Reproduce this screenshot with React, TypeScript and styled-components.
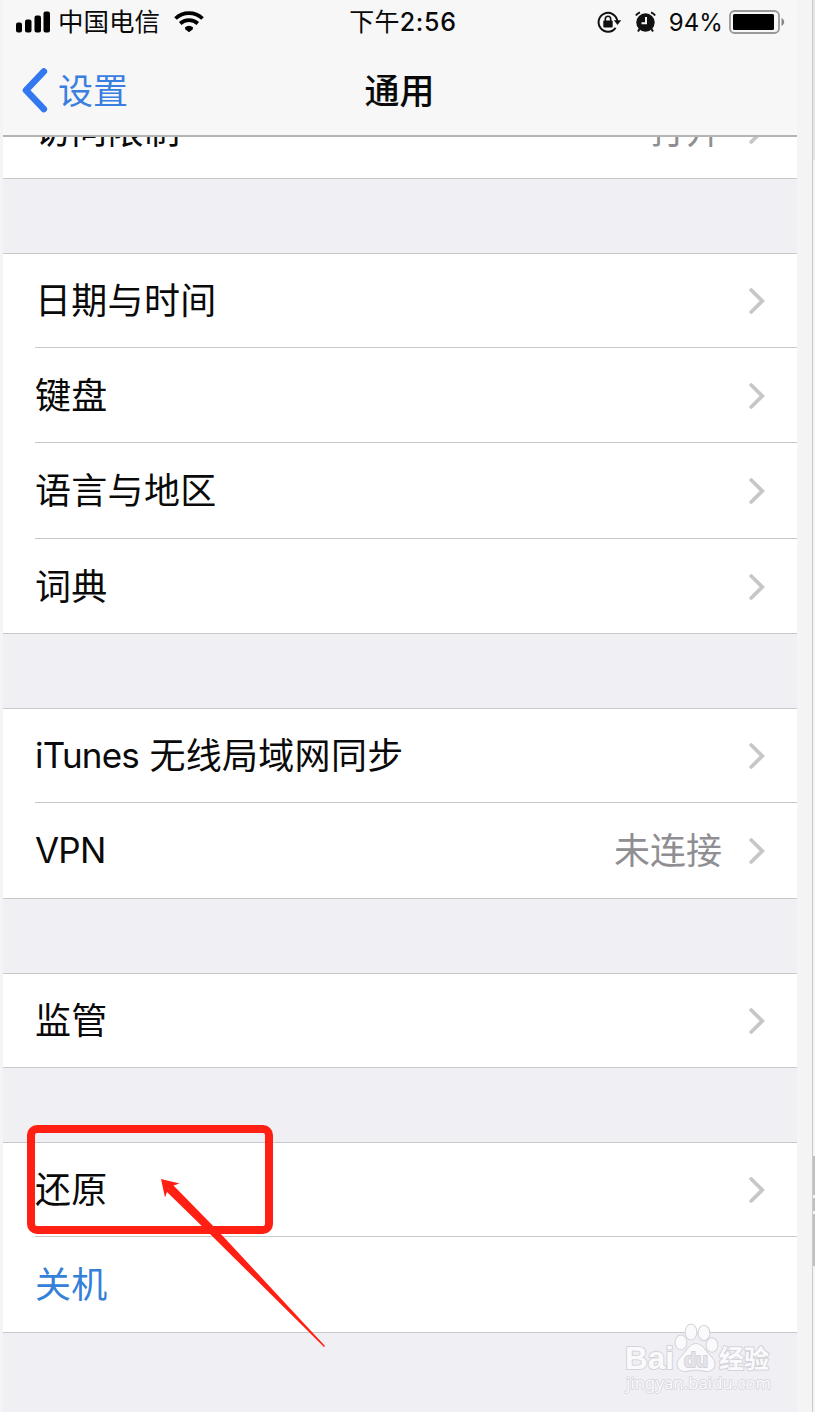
import React from 'react';
import styled, { createGlobalStyle } from 'styled-components';

const GlobalStyle = createGlobalStyle`
  * {
    box-sizing: border-box;
  }

  body {
    margin: 0;
    background: #f4f4f5;
    font-family: Inter, 'Noto Sans CJK SC', sans-serif;
    color: #0a0a0a;
  }
`;

const Page = styled.div`
  position: relative;
  display: flex;
  justify-content: space-between;
  width: 815px;
  height: 1412px;
  overflow: hidden;
`;

const Phone = styled.main`
  display: flex;
  flex-direction: column;
  width: 794px;
  margin-left: 3px;
  background: #efeff4;
`;

const Header = styled.header`
  height: 137px;
  background: #f7f7f8;
  border-bottom: 2px solid #b4b4b5;
`;

const StatusBar = styled.div`
  display: grid;
  grid-template-columns: 1fr auto 1fr;
  align-items: center;
  height: 44px;
  padding: 0 12px;
`;

const StatusGroup = styled.div<{ $end?: boolean }>`
  display: flex;
  align-items: center;
  justify-content: ${(props) => (props.$end ? 'flex-end' : 'flex-start')};

  svg {
    flex: none;
  }
`;

const Carrier = styled.span`
  margin: 0 14px 0 8px;
  font-size: 25.5px;
  line-height: 44px;
`;

const Clock = styled.span`
  padding: 1px 0 0 6px;
  font-size: 25px;
  font-weight: 500;
  letter-spacing: 0.7px;
  line-height: 43px;
`;

const Meridiem = styled.span`
  font-weight: 400;
  letter-spacing: 0.2px;
`;

const Percent = styled.span`
  margin: 0 6px 0 13px;
  padding-top: 1px;
  font-size: 24px;
  letter-spacing: 0.1px;
  line-height: 43px;
`;

const NavBar = styled.div`
  display: grid;
  grid-template-columns: 1fr auto 1fr;
  align-items: center;
  height: 91px;
  padding: 0 19px 0 18px;
`;

const BackButton = styled.button`
  display: flex;
  align-items: center;
  gap: 10px;
  padding: 0;
  border: 0;
  background: none;
  color: #3a7fe0;
  font: inherit;
  font-size: 35px;
  line-height: 91px;

  span {
    padding-top: 2px;
  }
`;

const Title = styled.h1`
  margin: 0;
  padding-top: 2px;
  font-size: 35px;
  font-weight: 500;
  line-height: 89px;
`;

const Group = styled.section`
  margin-bottom: 74px;
  background: #fff;
  border-top: 1px solid #c8c8cb;
`;

// shows only the lower part of a row that is scrolled under the header
const ClippedGroup = styled.section`
  display: flex;
  align-items: flex-end;
  height: 42px;
  margin-bottom: 74px;
  overflow: hidden;
  background: #fff;
`;

const RowBox = styled.div<{ $height: number; $last: boolean }>`
  flex: 1 0 auto;
  height: ${(props) => props.$height}px;
  padding-left: ${(props) => (props.$last ? 0 : 32)}px;
`;

const RowContent = styled.div<{ $last: boolean; $shifted: boolean }>`
  display: flex;
  align-items: center;
  height: 100%;
  padding: ${(props) => (props.$shifted ? 2 : 0)}px 31px 0 ${(props) => (props.$last ? 32 : 0)}px;
  border-bottom: 1px solid #c8c8cb;
`;

const Label = styled.span<{ $link?: boolean }>`
  flex: 1;
  color: ${(props) => (props.$link ? '#3580d8' : 'inherit')};
  font-size: 36px;
  letter-spacing: 0.3px;
  line-height: 52px;
`;

const Latin = styled.span`
  font-size: 35px;
  letter-spacing: -0.8px;
  vertical-align: 1px;
`;

const Value = styled.span`
  margin-right: 26px;
  color: #8e8e93;
  font-size: 36px;
  line-height: 52px;
`;

const ScrollTrack = styled.div`
  display: flex;
  flex-direction: column;
  width: 3px;
  border-left: 1px solid #cbcbce;
`;

const TrackPart = styled.div<{ $height: number; $color?: string }>`
  height: ${(props) => props.$height}px;
  background: ${(props) => props.$color || 'transparent'};
`;

const Highlight = styled.div`
  position: absolute;
  left: 27px;
  top: 1125px;
  width: 246px;
  height: 109px;
  border: 8px solid #ff2013;
  border-radius: 10px;
`;

const Arrow = styled.svg`
  position: absolute;
  left: 155px;
  top: 1170px;
`;

const Watermark = styled.svg`
  position: absolute;
  left: 620px;
  top: 1318px;
`;

const SignalIcon = () => (
  <svg width="35" height="22" viewBox="0 0 35 22">
    <rect x="1" y="11.500" width="6" height="10" rx="2" />
    <rect x="10" y="8.500" width="6.500" height="13" rx="2" />
    <rect x="19.500" y="4.500" width="6.500" height="17" rx="2" />
    <rect x="28.500" y="0.500" width="6.500" height="21" rx="2" />
  </svg>
);

const WifiIcon = () => (
  <svg width="30" height="22" viewBox="0 0 30 22" fill="none" stroke="#000" strokeWidth="3.8">
    <path d="M1.500 7.500C9 .3 21 .3 28.500 7.500" />
    <path d="M6.200 12.500C11 8 19 8 23.800 12.500" />
    <path d="M10.800 16.600q4.200-3.600 8.400 0L18.500 18.500 15 21.200 11.500 18.500z" fill="#000" stroke="none" />
  </svg>
);

const RotationLockIcon = () => (
  <svg width="25" height="22" viewBox="0 0 25 22">
    <path d="M18.6 16.8A9.4 9.4 0 1 1 20.3 10" fill="none" stroke="#111" strokeWidth="2" />
    <path d="M16.8 9.3h7.4l-3.7 4.8z" fill="#111" />
    <rect x="6.3" y="9.5" width="9.4" height="7" rx="1" fill="#111" />
    <path d="M8.3 10V8a2.7 2.7 0 0 1 5.4 0v2" fill="none" stroke="#111" strokeWidth="1.6" />
  </svg>
);

const AlarmIcon = () => (
  <svg width="21" height="22" viewBox="0 0 21 22" style={{ marginLeft: 13 }}>
    <circle cx="10.5" cy="11.5" r="9.2" fill="#111" />
    <path d="M.8 4.600C1.800 3 3.200 2 5 1.300M20.200 4.600C19.200 3 17.800 2 16 1.300" fill="none" stroke="#111" strokeWidth="1.8" />
    <path d="M4.500 18l-1.500 2.500M16.500 18l1.500 2.500" stroke="#111" strokeWidth="2" />
    <path d="M11 6v6.200H6.500" fill="none" stroke="#f7f7f8" strokeWidth="2" />
  </svg>
);

const BatteryIcon = () => (
  <svg width="56" height="24" viewBox="0 0 56 24">
    <rect x="1" y="1" width="49" height="22" rx="4.5" fill="none" stroke="#999" strokeWidth="1.8" />
    <rect x="4" y="4" width="41" height="16" rx="1.5" />
    <path d="M52.5 8c3.6 1.4 3.6 6.6 0 8z" fill="#888" />
  </svg>
);

const BackIcon = () => (
  <svg width="27" height="46" viewBox="0 0 27 46" fill="none" stroke="#3478f0" strokeWidth="6.6" strokeLinecap="round" strokeLinejoin="round">
    <path d="M22.800 3.500L5 22.200 22.800 41" />
  </svg>
);

const Chevron = () => (
  <svg width="18" height="28" viewBox="0 0 18 28" fill="none" stroke="#c7c7ca" strokeWidth="3.8" strokeLinecap="round" strokeLinejoin="miter">
    <path d="M3.2 3L14.2 14 3.2 25" />
  </svg>
);

interface IRow {
  label: React.ReactNode;
  height: number;
  value?: string;
  isLink?: boolean;
}

const clippedRow: IRow = { label: '访问限制', value: '打开', height: 96 };

const groups: IRow[][] = [
  [
    { label: '日期与时间', height: 94 },
    { label: '键盘', height: 95 },
    { label: '语言与地区', height: 96 },
    { label: '词典', height: 95 },
  ],
  [
    { label: <><Latin>iTunes</Latin> 无线局域网同步</>, height: 94 },
    { label: <Latin>VPN</Latin>, value: '未连接', height: 96 },
  ],
  [{ label: '监管', height: 94 }],
  [
    { label: '还原', height: 94 },
    { label: '关机', height: 96, isLink: true },
  ],
];

const Row = ({ row, last }: { row: IRow; last: boolean }) => (
  <RowBox $height={row.height} $last={last}>
    <RowContent $last={last} $shifted={row.height === 95}>
      <Label $link={row.isLink}>{row.label}</Label>
      {row.value && <Value>{row.value}</Value>}
      {!row.isLink && <Chevron />}
    </RowContent>
  </RowBox>
);

const BaiduWatermark = () => (
  <Watermark width="165" height="82" viewBox="0 0 165 82" fill="#fafafc" stroke="#d3d3d9" strokeWidth="2" strokeLinejoin="round" paintOrder="stroke" fontFamily="'Liberation Sans', 'Noto Sans CJK SC', sans-serif">
    <text x="5" y="51" fontSize="32" fontWeight="700" textLength="49" lengthAdjust="spacingAndGlyphs">Bai</text>
    <ellipse cx="61" cy="24.5" rx="5.4" ry="7" />
    <ellipse cx="71" cy="14" rx="5.4" ry="7.4" />
    <ellipse cx="84" cy="15" rx="5.4" ry="7.2" />
    <ellipse cx="92" cy="27" rx="5.4" ry="6.8" />
    <path d="M76 26c5.5 0 7.500 4.500 11 8.500 4.500 5 7.500 7 7.500 11.500 0 5-4 7.500-8.500 7-4-.5-6.500-1.500-10-1.500s-6 1-10 1.500c-4.500.5-8.500-2-8.500-7 0-4.500 3.500-6.500 7.500-11.500 3.500-4 5.500-8.500 11-8.500z" />
    <text x="64" y="49" fontSize="21" textLength="24" lengthAdjust="spacingAndGlyphs" fill="#e4e4ea" fontWeight="700">du</text>
    <text x="99" y="50" fontSize="25" fontWeight="700">经验</text>
    <text x="6" y="71" fontSize="16.5" textLength="145" strokeWidth="1.4" fontFamily="'Noto Sans', sans-serif">jingyan.baidu.com</text>
  </Watermark>
);

const App = (): React.ReactElement => (
  <Page>
    <GlobalStyle />
    <Phone>
      <Header>
        <StatusBar>
          <StatusGroup>
            <SignalIcon />
            <Carrier>中国电信</Carrier>
            <WifiIcon />
          </StatusGroup>
          <Clock><Meridiem>下午</Meridiem>2:56</Clock>
          <StatusGroup $end>
            <RotationLockIcon />
            <AlarmIcon />
            <Percent>94%</Percent>
            <BatteryIcon />
          </StatusGroup>
        </StatusBar>
        <NavBar>
          <BackButton>
            <BackIcon />
            <span>设置</span>
          </BackButton>
          <Title>通用</Title>
        </NavBar>
      </Header>
      <ClippedGroup>
        <Row row={clippedRow} last />
      </ClippedGroup>
      {groups.map((rows, groupIndex) => (
        <Group key={groupIndex}>
          {rows.map((row, index) => (
            <Row key={index} row={row} last={index === rows.length - 1} />
          ))}
        </Group>
      ))}
    </Phone>
    <ScrollTrack>
      <TrackPart $height={160} $color="#e6e6e8" />
      <TrackPart $height={996} />
      <TrackPart $height={39} $color="#bfbfc4" />
      <TrackPart $height={3} />
      <TrackPart $height={13} $color="#bfbfc4" />
      <TrackPart $height={3} />
      <TrackPart $height={52} $color="#bfbfc4" />
    </ScrollTrack>
    <Highlight />
    <Arrow width="175" height="182" viewBox="155 1170 175 182" fill="#ff2013">
      <polygon points="161,1179 179.5,1183.5 173.5,1185.5 220,1233 325,1346 324,1347 209,1233 167,1192 165,1197.5" />
    </Arrow>
    <BaiduWatermark />
  </Page>
);

export default App;
